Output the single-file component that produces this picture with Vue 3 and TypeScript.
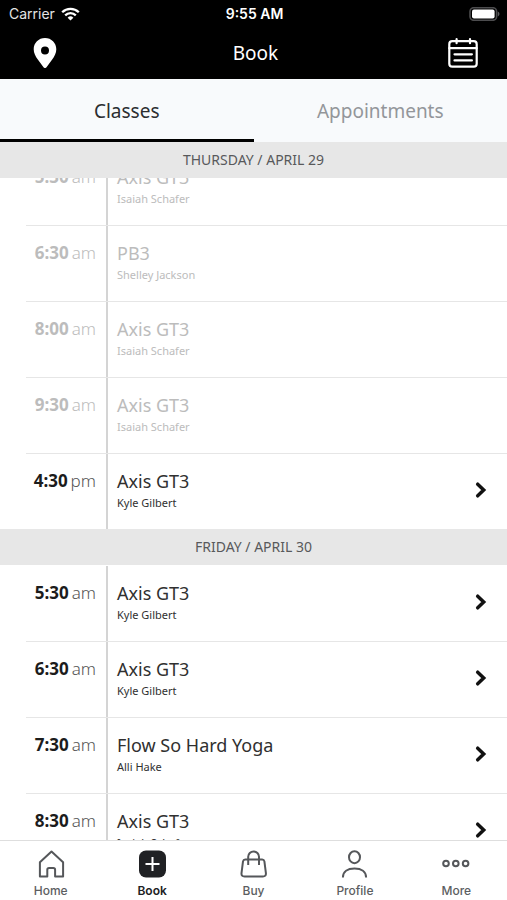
<script setup lang="ts">
import { onMounted, ref } from 'vue'

interface ClassSlot {
  time: string
  period: 'am' | 'pm'
  title: string
  instructor: string
  past?: boolean
}

interface Day {
  label: string
  slots: ClassSlot[]
}

type Tab = 'Classes' | 'Appointments'

const tabs: Tab[] = ['Classes', 'Appointments']
const activeTab = ref<Tab>('Classes')

const days: Day[] = [
  {
    label: 'THURSDAY / APRIL 29',
    slots: [
      { time: '5:30', period: 'am', title: 'Axis GT3', instructor: 'Isaiah Schafer', past: true },
      { time: '6:30', period: 'am', title: 'PB3', instructor: 'Shelley Jackson', past: true },
      { time: '8:00', period: 'am', title: 'Axis GT3', instructor: 'Isaiah Schafer', past: true },
      { time: '9:30', period: 'am', title: 'Axis GT3', instructor: 'Isaiah Schafer', past: true },
      { time: '4:30', period: 'pm', title: 'Axis GT3', instructor: 'Kyle Gilbert' },
    ],
  },
  {
    label: 'FRIDAY / APRIL 30',
    slots: [
      { time: '5:30', period: 'am', title: 'Axis GT3', instructor: 'Kyle Gilbert' },
      { time: '6:30', period: 'am', title: 'Axis GT3', instructor: 'Kyle Gilbert' },
      { time: '7:30', period: 'am', title: 'Flow So Hard Yoga', instructor: 'Alli Hake' },
      { time: '8:30', period: 'am', title: 'Axis GT3', instructor: 'Isaiah Schafer' },
    ],
  },
]

const navItems = ['Home', 'Book', 'Buy', 'Profile', 'More'] as const
const activeNav = ref<string>('Book')

const schedule = ref<HTMLElement | null>(null)

onMounted(() => {
  if (schedule.value) schedule.value.scrollTop = 29
})
</script>

<template>
  <div class="app">
    <header class="top">
      <div class="status">
        <div class="carrier">
          <span>Carrier</span>
          <svg width="19" height="14" viewBox="0 0 19 14" fill="none" stroke="#fff" stroke-width="2.3">
            <path d="M1.2 5.2a11.8 11.8 0 0 1 16.6 0" />
            <path d="M4.2 8.4a7.5 7.5 0 0 1 10.6 0" />
            <path d="M9.5 13.6 6.6 10.7a4.1 4.1 0 0 1 5.8 0z" fill="#fff" stroke="none" />
          </svg>
        </div>
        <span class="clock">9:55 AM</span>
        <svg class="battery" width="31" height="14" viewBox="0 0 31 14">
          <rect x="1" y="0.7" width="26.6" height="12.6" rx="3.8" fill="none" stroke="#4c4c4e" stroke-width="1.6" />
          <rect x="3" y="2.4" width="22.6" height="9.2" rx="2" fill="#fff" />
          <path d="M28.800 4.600c2.200.7 2.200 4.100 0 4.800z" fill="#5c5c5e" />
        </svg>
      </div>
      <div class="titlebar">
        <button class="icon-button" type="button" aria-label="Location">
          <svg width="24" height="30" viewBox="0 0 24 30">
            <path
              fill="#fff"
              fill-rule="evenodd"
              d="M12 0C5.6 0 .7 4.9.7 11.2c0 3.700 1.700 6.900 4.300 10.600L10.500 29.300q1.500 1.500 3 0L19 21.800c2.600-3.700 4.300-6.900 4.300-10.600C23.300 4.900 18.400 0 12 0zm0 8.400a4 4 0 1 1 0 8 4 4 0 0 1 0-8z"
            />
          </svg>
        </button>
        <h1>Book</h1>
        <button class="icon-button" type="button" aria-label="Schedule">
          <svg width="30" height="30" viewBox="0 0 30 30" fill="none" stroke="#fff" stroke-width="2.2" stroke-linecap="round">
            <rect x="1.300" y="3.200" width="27.400" height="25.500" rx="3" />
            <path d="M1.300 10.200h27.400M8.600 1.200v4M22 1.200v4M6.500 16.300h17.400M6.500 22.400h17.400" />
          </svg>
        </button>
      </div>
    </header>

    <div class="tabs" role="tablist">
      <button
        v-for="tab in tabs"
        :key="tab"
        type="button"
        role="tab"
        class="tab"
        :class="{ active: tab === activeTab }"
        :aria-selected="tab === activeTab"
        @click="activeTab = tab"
      >
        {{ tab }}
      </button>
    </div>

    <main ref="schedule" class="schedule">
      <section v-for="day in days" :key="day.label">
        <h2>{{ day.label }}</h2>
        <ul>
          <li v-for="slot in day.slots" :key="slot.time" class="slot" :class="{ past: slot.past }">
            <div class="time">
              <strong>{{ slot.time }}</strong><span>{{ slot.period }}</span>
            </div>
            <div class="details">
              <h3>{{ slot.title }}</h3>
              <p>{{ slot.instructor }}</p>
            </div>
            <button v-if="!slot.past" class="open" type="button" :aria-label="`Open ${slot.title}`">
              <svg width="12" height="18" viewBox="0 0 12 18" fill="none" stroke="#111" stroke-width="3.500">
                <path d="M2.700 3.200 8.700 9 2.700 14.800" stroke-linecap="round" stroke-linejoin="miter" />
              </svg>
            </button>
          </li>
        </ul>
      </section>
    </main>

    <nav class="bottom-nav">
      <a
        v-for="item in navItems"
        :key="item"
        href="#"
        :class="{ active: item === activeNav }"
        @click.prevent="activeNav = item"
      >
        <svg width="28" height="28" viewBox="0 0 28 28" fill="none" stroke="#55575a" stroke-width="2">
          <path
            v-if="item === 'Home'"
            stroke-linejoin="round"
            d="M14.500 1.500 2.900 12.300V26.600h7.400v-6.900q0-1.800 1.800-1.800h4.200q1.800 0 1.800 1.800v6.900h8V12.300z"
          />
          <template v-else-if="item === 'Book'">
            <rect x="1" y="0.500" width="27" height="27" rx="7" fill="#202124" stroke="none" />
            <path d="M14.500 7v14M7.500 14h14" stroke="#fff" />
          </template>
          <template v-else-if="item === 'Buy'">
            <path
              stroke-linejoin="round"
              d="M5.200 9.600h17q1.800 0 2.200 1.800l1.500 11.800q.3 3.300-3 3.300H4.500q-3.300 0-3-3.300L3 11.400q.4-1.800 2.200-1.800z"
            />
            <path d="M8.200 15V6.800a5.400 5.400 0 0 1 10.800 0V15" />
          </template>
          <template v-else-if="item === 'Profile'">
            <ellipse cx="13.500" cy="7.200" rx="5.500" ry="6" />
            <path d="M1.900 27.500c0-5.800 4.600-8.900 11.600-8.900s11.600 3.100 11.600 8.900" />
          </template>
          <template v-else>
            <circle cx="4" cy="13.500" r="2.800" />
            <circle cx="13.800" cy="13.500" r="2.800" />
            <circle cx="23.600" cy="13.500" r="2.800" />
          </template>
        </svg>
        <span>{{ item }}</span>
      </a>
    </nav>
  </div>
</template>

<style>
body {
  margin: 0;
}
</style>

<style scoped>
.app {
  display: flex;
  flex-direction: column;
  height: 100vh;
  overflow: hidden;
  background: #fff;
  color: #303030;
  font-family: 'Noto Sans', 'Open Sans', sans-serif;
}

button {
  margin: 0;
  padding: 0;
  border: 0;
  background: none;
  font: inherit;
  color: inherit;
  cursor: pointer;
}

.top {
  flex: none;
  background: #000;
  color: #fff;
}

.status {
  display: grid;
  grid-template-columns: 1fr auto 1fr;
  align-items: center;
  height: 27px;
  padding: 0 7px 0 9px;
  font-family: Inter, 'Liberation Sans', sans-serif;
  font-size: 14px;
}

.carrier {
  display: flex;
  align-items: center;
  gap: 6px;
  color: #e4e4e4;
}

.clock {
  font-weight: 600;
}

.battery {
  justify-self: end;
}

.titlebar {
  display: grid;
  grid-template-columns: 1fr auto 1fr;
  align-items: center;
  height: 52px;
  padding: 0 29px 0 33px;
}

.icon-button {
  display: flex;
  justify-self: start;
}

.icon-button:last-child {
  justify-self: end;
}

h1 {
  margin: 0;
  font-size: 19px;
  font-weight: 400;
  line-height: 28px;
}

.tabs {
  display: flex;
  flex: none;
  height: 63px;
  background: #f8fafc;
}

.tab {
  flex: 1;
  border-top: 4px solid transparent;
  border-bottom: 3px solid transparent;
  color: #93969a;
  font-size: 19px;
}

.tab.active {
  border-bottom-color: #000;
  color: #2b2d30;
}

.schedule {
  flex: 1;
  min-height: 0;
  overflow-y: auto;
  scrollbar-width: none;
}

h2 {
  position: sticky;
  top: 0;
  z-index: 1;
  margin: 0;
  background: #e7e7e7;
  color: #58595b;
  font-size: 14px;
  font-weight: 400;
  line-height: 36px;
  text-align: center;
}

ul {
  margin: 0;
  padding: 0;
  list-style: none;
}

.slot {
  display: flex;
  box-sizing: border-box;
  height: 76px;
  margin-left: 26px;
  border-top: 1px solid #e6e6e6;
}

.slot:first-child {
  border-top-color: transparent;
}

.time {
  display: flex;
  justify-content: flex-end;
  gap: 3px;
  box-sizing: border-box;
  width: 82px;
  padding: 15px 10px 0 0;
  border-right: 2px solid #d4d4d4;
  font-size: 17px;
  line-height: 24px;
}

.time strong {
  color: #1c1c1c;
  font-weight: 700;
}

.time span {
  color: #555;
  font-weight: 300;
}

.details {
  flex: 1;
  padding: 15px 0 0 9px;
}

h3 {
  margin: 0;
  font-size: 18px;
  font-weight: 400;
  line-height: 24px;
}

p {
  margin: 0;
  font-size: 11px;
  line-height: 20px;
}

.past h3,
.past p,
.past .time strong,
.past .time span {
  color: #bcbcbc;
}

.open {
  display: flex;
  align-items: center;
  padding: 0 20px 4px 0;
}

.bottom-nav {
  display: flex;
  flex: none;
  height: 59px;
  border-top: 1px solid #dedede;
  background: #fff;
}

.bottom-nav a {
  display: flex;
  flex: 1;
  flex-direction: column;
  align-items: center;
  gap: 5px;
  padding-top: 9px;
  color: #5c5e61;
  font-family: Inter, 'Liberation Sans', sans-serif;
  font-size: 12px;
  font-weight: 500;
  line-height: 16px;
  text-decoration: none;
}

.bottom-nav a.active {
  color: #202124;
  font-weight: 600;
}
</style>
